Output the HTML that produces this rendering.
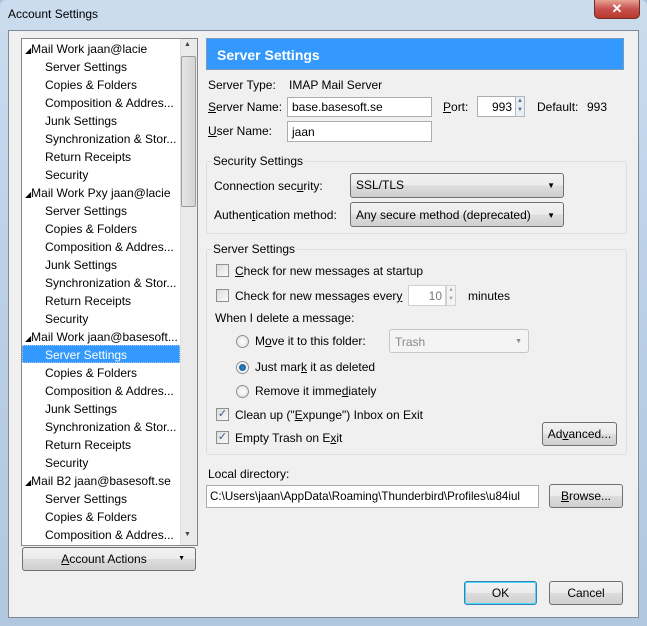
<!DOCTYPE html><html><head><style>
*{margin:0;padding:0;box-sizing:border-box}
body{width:647px;height:626px;overflow:hidden;background:#a9c3dd;font-family:"Liberation Sans",sans-serif;font-size:12px;color:#000;position:relative}
.a{position:absolute;white-space:nowrap}
.frame{left:0;top:0;width:647px;height:626px;background:linear-gradient(#cbdcee,#bcd1e8 40%,#b0c7df);border-radius:6px 6px 0 0}
.content{left:8px;top:30px;width:631px;height:588px;background:#f0f0f0;border:1px solid #7c8a99}
.inp{background:#fff;border:1px solid #abadb3;border-top-color:#abadb3}
.btn{background:linear-gradient(#f2f2f2,#ebebeb 50%,#dddddd 51%,#cfcfcf);border:1px solid #707070;border-radius:3px;text-align:center}
.sel{background:linear-gradient(#f2f2f2,#ebebeb 50%,#dddddd 51%,#cfcfcf);border:1px solid #707070;border-radius:3px}
.grp{border:1px solid #d5dfe5;border-radius:3px}
.cb{width:13px;height:13px;border:1px solid #8f8f8f;background:linear-gradient(135deg,#dcdcdc,#fbfbfb)}
.rd{width:13px;height:13px;border:1px solid #8f8f8f;border-radius:50%;background:radial-gradient(#fff,#dcdcdc)}
.tree div{height:18px;line-height:18px}
.arr{font-size:8px}
</style></head><body>
<div class="a frame"></div>
<div class="a" style="left:8px;top:7px;font-size:12px">Account Settings</div>
<div class="a" style="left:594px;top:0;width:46px;height:19px;background:linear-gradient(#e8a493,#c75050 50%,#b83a2a);border:1px solid #6d2e2b;border-top:none;border-radius:0 0 5px 5px;color:#fff;text-align:center;font-weight:bold;font-size:13px;line-height:18px">✕</div>
<div class="a content"></div>
<!-- tree -->
<div class="a" style="left:21px;top:38px;width:177px;height:508px;background:#fff;border:1px solid #828790"></div>
<div class="a" style="left:22px;top:345px;width:158px;height:18px;background:#3399ff;border:1px dotted #b0c8e6"></div>
<div class="a tree" style="left:22px;top:40px;width:158px;overflow:hidden;height:504px">
<div><span class="arr" style="margin-left:3px">◢</span>Mail Work jaan@lacie</div>
<div style="padding-left:23px">Server Settings</div><div style="padding-left:23px">Copies &amp; Folders</div><div style="padding-left:23px">Composition &amp; Addres...</div><div style="padding-left:23px">Junk Settings</div><div style="padding-left:23px">Synchronization &amp; Stor...</div><div style="padding-left:23px">Return Receipts</div><div style="padding-left:23px">Security</div>
<div><span class="arr" style="margin-left:3px">◢</span>Mail Work Pxy jaan@lacie</div>
<div style="padding-left:23px">Server Settings</div><div style="padding-left:23px">Copies &amp; Folders</div><div style="padding-left:23px">Composition &amp; Addres...</div><div style="padding-left:23px">Junk Settings</div><div style="padding-left:23px">Synchronization &amp; Stor...</div><div style="padding-left:23px">Return Receipts</div><div style="padding-left:23px">Security</div>
<div><span class="arr" style="margin-left:3px">◢</span>Mail Work jaan@basesoft...</div>
<div style="padding-left:23px;color:#fff">Server Settings</div><div style="padding-left:23px">Copies &amp; Folders</div><div style="padding-left:23px">Composition &amp; Addres...</div><div style="padding-left:23px">Junk Settings</div><div style="padding-left:23px">Synchronization &amp; Stor...</div><div style="padding-left:23px">Return Receipts</div><div style="padding-left:23px">Security</div>
<div><span class="arr" style="margin-left:3px">◢</span>Mail B2 jaan@basesoft.se</div>
<div style="padding-left:23px">Server Settings</div><div style="padding-left:23px">Copies &amp; Folders</div><div style="padding-left:23px">Composition &amp; Addres...</div>
</div>
<div class="a" style="left:180px;top:39px;width:17px;height:506px;background:#eaeaea;border-left:1px solid #e0e0e0"></div>
<div class="a" style="left:181px;top:56px;width:15px;height:151px;background:linear-gradient(90deg,#e6e6e6,#d4d4d4);border:1px solid #9c9c9c;border-radius:2px"></div>
<div class="a" style="left:184px;top:41px;font-size:7px;color:#444">▲</div>
<div class="a" style="left:184px;top:531px;font-size:7px;color:#444">▼</div>
<div class="a btn" style="left:22px;top:547px;width:174px;height:24px;line-height:22px"><span style="margin-left:-10px"><u>A</u>ccount Actions</span><span style="position:absolute;right:10px;font-size:7px">▼</span></div>
<!-- right -->
<div class="a" style="left:206px;top:38px;width:418px;height:32px;background:#3399ff;border:1px solid #7a9ab8"></div>
<div class="a" style="left:217px;top:47px;color:#fff;font-weight:bold;font-size:14px">Server Settings</div>
<div class="a" style="left:208px;top:78px">Server Type:</div>
<div class="a" style="left:289px;top:78px">IMAP Mail Server</div>
<div class="a" style="left:208px;top:100px"><u>S</u>erver Name:</div>
<div class="a inp" style="left:287px;top:97px;width:145px;height:20px;padding:2px 4px">base.basesoft.se</div>
<div class="a" style="left:443px;top:100px"><u>P</u>ort:</div>
<div class="a inp" style="left:477px;top:96px;width:39px;height:21px;padding:3px 3px;text-align:right">993</div>
<div class="a" style="left:515px;top:96px;width:10px;height:21px;background:#e8eef4;border:1px solid #b0b8c0;font-size:6px;line-height:9px;text-align:center;color:#4a6a9a">▲<br>▼</div>
<div class="a" style="left:537px;top:100px">Default:</div>
<div class="a" style="left:587px;top:100px">993</div>
<div class="a" style="left:208px;top:124px"><u>U</u>ser Name:</div>
<div class="a inp" style="left:287px;top:121px;width:145px;height:21px;padding:3px 4px">jaan</div>
<div class="a grp" style="left:206px;top:161px;width:421px;height:73px"></div>
<div class="a" style="left:211px;top:154px;background:#f0f0f0;padding:0 2px">Security Settings</div>
<div class="a" style="left:214px;top:179px">Connection sec<u>u</u>rity:</div>
<div class="a sel" style="left:350px;top:173px;width:214px;height:25px;padding:4px 5px">SSL/TLS<span style="position:absolute;right:8px;top:7px;font-size:8px">▼</span></div>
<div class="a" style="left:214px;top:208px">Authen<u>t</u>ication method:</div>
<div class="a sel" style="left:350px;top:202px;width:214px;height:25px;padding:5px 5px">Any secure method (deprecated)<span style="position:absolute;right:8px;top:8px;font-size:8px">▼</span></div>
<div class="a grp" style="left:206px;top:249px;width:421px;height:206px"></div>
<div class="a" style="left:211px;top:242px;background:#f0f0f0;padding:0 2px">Server Settings</div>
<div class="a cb" style="left:216px;top:264px"></div>
<div class="a" style="left:235px;top:264px"><u>C</u>heck for new messages at startup</div>
<div class="a cb" style="left:216px;top:289px"></div>
<div class="a" style="left:235px;top:289px">Check for new messages ever<u>y</u></div>
<div class="a inp" style="left:408px;top:285px;width:38px;height:21px;padding:3px 3px;text-align:right;color:#777;border-color:#d0d0d0">10</div>
<div class="a" style="left:446px;top:285px;width:10px;height:21px;background:#f4f4f4;border:1px solid #d0d0d0;font-size:6px;line-height:9px;text-align:center;color:#aaa">▲<br>▼</div>
<div class="a" style="left:468px;top:289px">minutes</div>
<div class="a" style="left:215px;top:311px">When I delete a message:</div>
<div class="a rd" style="left:236px;top:335px"></div>
<div class="a" style="left:255px;top:334px">M<u>o</u>ve it to this folder:</div>
<div class="a" style="left:389px;top:329px;width:140px;height:24px;background:#f4f4f4;border:1px solid #c6c6c6;border-radius:3px;padding:5px 5px;color:#888">Trash<span style="position:absolute;right:6px;top:8px;font-size:7px">▼</span></div>
<div class="a rd" style="left:236px;top:361px;background:radial-gradient(#2a8fd8 0,#1a5f9a 3px,#fff 4px,#dcdcdc)"></div>
<div class="a" style="left:255px;top:360px">Just mar<u>k</u> it as deleted</div>
<div class="a rd" style="left:236px;top:385px"></div>
<div class="a" style="left:255px;top:384px">Remove it imme<u>d</u>iately</div>
<div class="a cb" style="left:216px;top:408px;font-size:11px;line-height:11px;text-align:center;color:#3c5a8a">✓</div>
<div class="a" style="left:235px;top:408px">Clean up ("<u>E</u>xpunge") Inbox on Exit</div>
<div class="a cb" style="left:216px;top:431px;font-size:11px;line-height:11px;text-align:center;color:#3c5a8a">✓</div>
<div class="a" style="left:235px;top:431px">Empty Trash on E<u>x</u>it</div>
<div class="a btn" style="left:542px;top:422px;width:75px;height:24px;line-height:22px">Ad<u>v</u>anced...</div>
<div class="a" style="left:208px;top:467px">Local directory:</div>
<div class="a inp" style="left:206px;top:485px;width:333px;height:23px;padding:4px 3px;overflow:hidden;font-size:11.6px">C:\Users\jaan\AppData\Roaming\Thunderbird\Profiles\u84iul</div>
<div class="a btn" style="left:549px;top:484px;width:74px;height:24px;line-height:22px"><u>B</u>rowse...</div>
<div class="a btn" style="left:464px;top:581px;width:73px;height:24px;line-height:22px;border-color:#3c7fb1;box-shadow:inset 0 0 0 1px #48d8fb">OK</div>
<div class="a btn" style="left:549px;top:581px;width:74px;height:24px;line-height:22px">Cancel</div>
</body></html>
